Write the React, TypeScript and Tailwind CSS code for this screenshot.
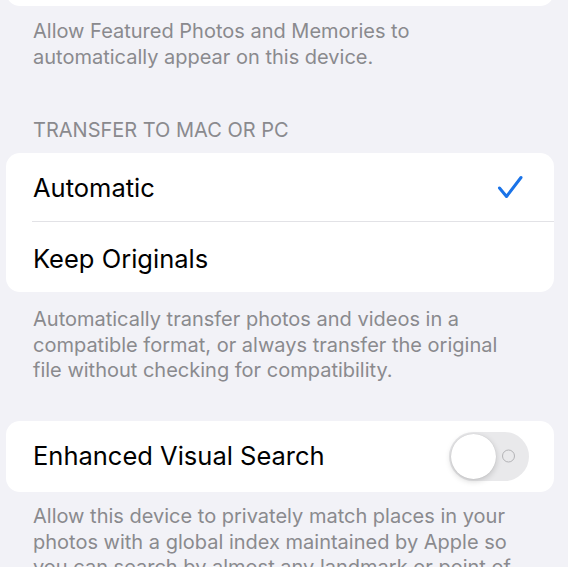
import React, { useState } from 'react';

const font = { fontFamily: 'Inter, "Noto Sans", sans-serif' };

const Footer: React.FC<{ children: React.ReactNode; className?: string }> = ({ children, className = '' }) => (
  <p className={`pl-[33px] pr-[38px] text-[20px] leading-[25.6px] text-[#8a8a8e] ${className}`}>{children}</p>
);

const Check = () => (
  <svg width="28" height="28" viewBox="0 0 28 28" fill="none" className="text-[#1a73e8]">
    <path d="M3.5 14 L10.5 22.5 L25 3.5" stroke="currentColor" strokeWidth="3" strokeLinecap="round" strokeLinejoin="round" />
  </svg>
);

const Toggle: React.FC<{ on: boolean; onChange: () => void }> = ({ on, onChange }) => (
  <button
    onClick={onChange}
    className={`relative w-[80px] h-[49px] rounded-full transition-colors ${on ? 'bg-[#34c759]' : 'bg-[#e9e9eb]'}`}
  >
    {!on && (
      <span className="absolute right-[14px] top-1/2 -translate-y-1/2 w-[13px] h-[13px] rounded-full border-[1.5px] border-[#b3b3b6]" />
    )}
    <span
      className={`absolute top-[2px] left-[2px] w-[45px] h-[45px] rounded-full bg-white shadow-[0_2px_6px_rgba(0,0,0,0.18),0_0_1px_rgba(0,0,0,0.15)] transition-transform ${on ? 'translate-x-[31px]' : ''}`}
    />
  </button>
);

export default function App() {
  const [mode, setMode] = useState<'auto' | 'keep'>('auto');
  const [visualSearch, setVisualSearch] = useState(false);

  return (
    <div className="w-[568px] h-[567px] overflow-hidden bg-[#f2f2f7] text-black" style={font}>
      {/* tail of the card above */}
      <div className="h-[6px] overflow-hidden flex flex-col justify-end">
        <div className="ml-[6px] mr-[14px] h-[40px] shrink-0 rounded-[14px] bg-white" />
      </div>

      <Footer className="pt-[13px]">
        Allow Featured Photos and Memories to automatically appear on this device.
      </Footer>

      <h3 className="pl-[33px] mt-[48px] text-[20px] leading-[24px] text-[#8a8a8e] uppercase">Transfer to Mac or PC</h3>

      <div className="mt-[11px] ml-[6px] mr-[14px] rounded-[14px] bg-white">
        <button
          onClick={() => setMode('auto')}
          className="w-full h-[68px] flex items-center justify-between pt-[2px] pl-[27px] pr-[30px] text-left"
        >
          <span className="text-[25.5px]">Automatic</span>
          {mode === 'auto' && <Check />}
        </button>
        <div className="ml-[26px] h-px bg-[#e2e2e6]" />
        <button
          onClick={() => setMode('keep')}
          className="w-full h-[70px] flex items-center justify-between pt-[3px] pl-[27px] pr-[30px] text-left"
        >
          <span className="text-[25.5px]">Keep Originals</span>
          {mode === 'keep' && <Check />}
        </button>
      </div>

      <Footer className="pt-[15px]">
        Automatically transfer photos and videos in a compatible format, or always transfer the original file without checking for compatibility.
      </Footer>

      <div className="mt-[37px] ml-[6px] mr-[14px] h-[71px] rounded-[14px] bg-white flex items-center justify-between pl-[27px] pr-[25px]">
        <span className="text-[25.5px]">Enhanced Visual Search</span>
        <Toggle on={visualSearch} onChange={() => setVisualSearch(v => !v)} />
      </div>

      <Footer className="pt-[12px]">
        Allow this device to privately match places in your photos with a global index maintained by Apple so you can search by almost any landmark or point of interest.
      </Footer>
    </div>
  );
}
